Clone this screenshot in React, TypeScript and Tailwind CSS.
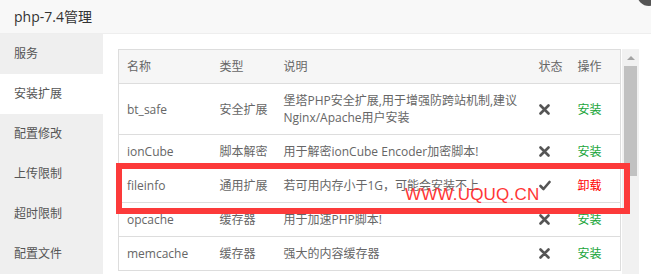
import React from 'react'

// Extension rows shown in the php manager table
type Ext = {
  name: string
  type: string
  desc: string
  installed: boolean
}

const exts: Ext[] = [
  { name: 'bt_safe', type: '安全扩展', desc: '堡塔PHP安全扩展,用于增强防跨站机制,建议Nginx/Apache用户安装', installed: false },
  { name: 'ionCube', type: '脚本解密', desc: '用于解密ionCube Encoder加密脚本!', installed: false },
  { name: 'fileinfo', type: '通用扩展', desc: '若可用内存小于1G，可能会安装不上', installed: true },
  { name: 'opcache', type: '缓存器', desc: '用于加速PHP脚本!', installed: false },
  { name: 'memcache', type: '缓存器', desc: '强大的内容缓存器', installed: false },
]

const menu = ['服务', '安装扩展', '配置修改', '上传限制', '超时限制', '配置文件']

const CrossIcon = () => (
  <svg width="11" height="11" viewBox="0 0 11 11" className="block">
    <path d="M1.5 1.5 L9.5 9.5 M9.5 1.5 L1.5 9.5" stroke="#555" strokeWidth="2.6" strokeLinecap="round" />
  </svg>
)

const CheckIcon = () => (
  <svg width="12" height="11" viewBox="0 0 12 11" className="block">
    <path d="M1.5 6 L4.5 9 L10.5 2" stroke="#555" strokeWidth="2.6" fill="none" strokeLinecap="round" strokeLinejoin="round" />
  </svg>
)

const App = () => {
  return (
    <div
      className="relative w-[651px] h-[274px] overflow-hidden bg-white text-[#666]"
      style={{ fontFamily: '"Open Sans", "Noto Sans CJK SC", sans-serif' }}
    >
      {/* Title bar */}
      <div className="h-[34px] bg-[#f8f8f8] border-b border-[#eee] flex items-center px-[14px] text-[14px] text-[#333]">
        php-7.4管理
      </div>
      {/* close button peeking out at the corner */}
      <div className="absolute -top-[18px] -right-[10px] w-[24px] h-[24px] rounded-full bg-[#555]" />

      <div className="flex h-[240px]">
        {/* Sidebar menu */}
        <div className="w-[104px] bg-[#efefef] flex flex-col">
          {menu.map((m, i) => (
            <div
              key={m}
              className={
                i === 1
                  ? 'h-[40px] shrink-0 flex items-center pl-[14px] text-[12px] text-[#555] bg-white'
                  : 'h-[40px] shrink-0 flex items-center pl-[14px] text-[12px] text-[#555]'
              }
            >
              {m}
            </div>
          ))}
        </div>

        {/* Content */}
        <div className="flex-1 pt-[15px] pl-[15px] pr-[12px] flex">
          <div className="w-[503px]">
            <table className="w-full table-fixed border-collapse border border-[#ddd] text-[12px] leading-[17px]">
              <colgroup>
                <col className="w-[93px]" />
                <col className="w-[64px]" />
                <col />
                <col className="w-[39px]" />
                <col className="w-[51px]" />
              </colgroup>
              <thead>
                <tr className="bg-[#f6f6f6] h-[34px]">
                  <th className="text-left font-normal px-[8px] py-[8px]">名称</th>
                  <th className="text-left font-normal px-[8px] py-[8px]">类型</th>
                  <th className="text-left font-normal px-[8px] py-[8px]">说明</th>
                  <th className="text-left font-normal pl-[8px] pr-0 py-[8px] whitespace-nowrap">状态</th>
                  <th className="text-left font-normal pl-[8px] pr-0 py-[8px] whitespace-nowrap">操作</th>
                </tr>
              </thead>
              <tbody>
                {exts.map((e) => (
                  <tr key={e.name} className="border-t border-[#ddd] h-[34px]">
                    <td className="px-[8px] py-[8px] whitespace-nowrap">{e.name}</td>
                    <td className="px-[8px] py-[8px] whitespace-nowrap">{e.type}</td>
                    <td className="pl-[8px] pr-[10px] py-[8px]">{e.desc}</td>
                    <td className="pl-[8px] pr-0 py-[8px]">{e.installed ? <CheckIcon /> : <CrossIcon />}</td>
                    <td className="pl-[8px] pr-0 py-[8px] whitespace-nowrap">
                      {e.installed ? (
                        <span className="text-[#ff0000]">卸载</span>
                      ) : (
                        <span className="text-[#20a53a]">安装</span>
                      )}
                    </td>
                  </tr>
                ))}
              </tbody>
            </table>
          </div>

          {/* scrollbar */}
          <div className="w-[17px] ml-[1px] bg-[#f1f1f1] flex flex-col items-center">
            <div className="h-[17px] flex items-center justify-center">
              <div className="w-0 h-0 border-l-[4px] border-r-[4px] border-b-[4px] border-l-transparent border-r-transparent border-b-[#a3a3a3]" />
            </div>
            <div className="w-[13px] h-[110px] bg-[#c1c1c1]" />
          </div>
        </div>
      </div>

      {/* red highlight box and watermark pasted over the screenshot */}
      <div className="absolute left-[116px] top-[163px] w-[514px] h-[51px] border-[6px] border-[#fc3a3a]" />
      <div
        className="absolute left-[405px] top-[185px] text-[17px] leading-[20px] text-[#ff3636] tracking-[0.2px]"
        style={{ fontFamily: '"Liberation Sans", sans-serif' }}
      >
        WWW.UQUQ.CN
      </div>
    </div>
  )
}

export default App
